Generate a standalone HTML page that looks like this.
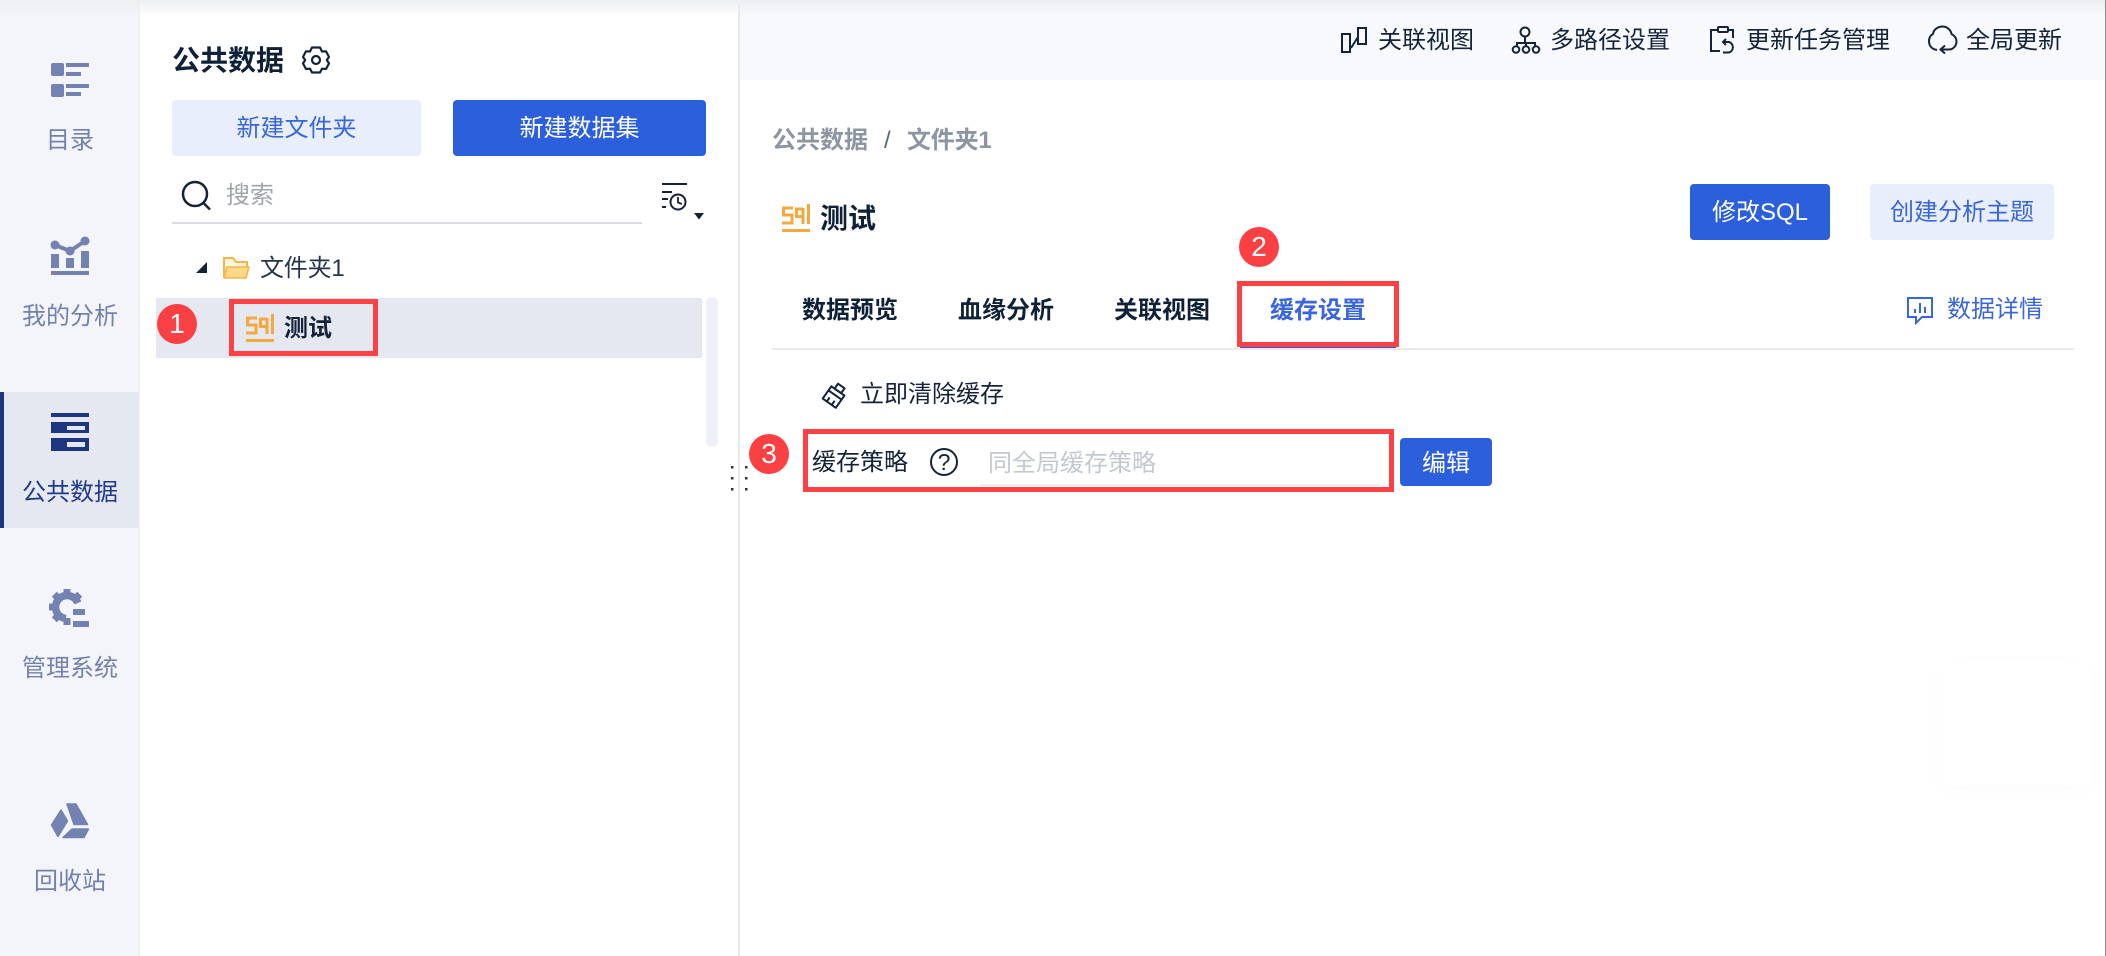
<!DOCTYPE html>
<html lang="zh-CN">
<head>
<meta charset="utf-8">
<title>公共数据</title>
<style>
html,body{margin:0;padding:0;background:#fff}
body{width:2106px;height:956px;position:relative;overflow:hidden;font-family:"Liberation Sans","Noto Sans CJK SC",sans-serif;color:#14233a}
.b{position:absolute;box-sizing:border-box}
.t{position:absolute;white-space:nowrap;font-size:24px;line-height:32px;height:32px;margin-top:1px}
.b.t{margin-top:0}
.c{text-align:center}
.bold{font-weight:700}
.side{color:#7281ad;left:0;width:140px;text-align:center}
.red{position:absolute;box-sizing:border-box;border:5px solid #fd4145}
.num{position:absolute;width:40px;height:40px;border-radius:50%;background:#fb4044;color:#fff;font-size:28px;line-height:40px;text-align:center;font-family:"Liberation Sans",sans-serif}
svg{position:absolute;left:0;top:0}
</style>
</head>
<body>
<!-- backgrounds -->
<div class="b" style="left:740px;top:0;width:1366px;height:80px;background:#f8f9fc"></div>
<div class="b" style="left:0;top:0;width:140px;height:956px;background:#f4f5fa;border-right:2px solid #eef0f5"></div>
<div class="b" style="left:0;top:392px;width:139px;height:136px;background:#e5e8f1;border-left:4px solid #1c3680"></div>
<div class="b" style="left:738px;top:0;width:2px;height:956px;background:#e6e8ef"></div>
<div class="b" style="left:0;top:0;width:2106px;height:16px;background:linear-gradient(#eceef1,rgba(240,241,245,0))"></div>
<div class="b" style="left:2105px;top:0;width:1px;height:956px;background:#8c8c8c"></div>
<div class="b" style="left:1938px;top:660px;width:154px;height:125px;background:#fff;box-shadow:0 6px 26px rgba(0,0,0,.014)"></div>

<!-- sidebar labels -->
<div class="t side" style="top:124px">目录</div>
<div class="t side" style="top:300px">我的分析</div>
<div class="t side" style="top:476px;color:#1f3a8a">公共数据</div>
<div class="t side" style="top:652px">管理系统</div>
<div class="t side" style="top:865px">回收站</div>

<!-- panel -->
<div class="t bold" style="left:172px;top:44px;font-size:28px;color:#0f2138">公共数据</div>
<div class="b t c" style="left:172px;top:100px;width:249px;height:56px;line-height:58px;background:#e8eefb;color:#3a66dc;border-radius:4px">新建文件夹</div>
<div class="b t c" style="left:453px;top:100px;width:253px;height:56px;line-height:58px;background:#2c5fdc;color:#fff;border-radius:4px">新建数据集</div>
<div class="t" style="left:226px;top:179px;color:#a0a4ab">搜索</div>
<div class="b" style="left:172px;top:222px;width:470px;height:2px;background:#d9dce1"></div>
<div class="t" style="left:260px;top:252px;color:#26354b;letter-spacing:-.2px">文件夹1</div>
<div class="b" style="left:156px;top:298px;width:546px;height:60px;background:#e5e8f1"></div>
<div class="t bold" style="left:284px;top:312px;color:#14233a">测试</div>
<div class="b" style="left:706px;top:297px;width:12px;height:150px;background:#eef0f5;border-radius:6px"></div>
<div class="red" style="left:229px;top:299px;width:149px;height:57px"></div>
<div class="num" style="left:157px;top:304px">1</div>

<!-- toolbar -->
<div class="t" style="left:1378px;top:24px">关联视图</div>
<div class="t" style="left:1550px;top:24px">多路径设置</div>
<div class="t" style="left:1746px;top:24px">更新任务管理</div>
<div class="t" style="left:1966px;top:24px">全局更新</div>

<!-- main -->
<div class="t bold" style="left:772px;top:124px;color:#8d95a3">公共数据</div>
<div class="t" style="left:884px;top:124px;color:#5c6675">/</div>
<div class="t bold" style="left:907px;top:124px;color:#8d95a3;letter-spacing:-.2px">文件夹1</div>
<div class="t bold" style="left:820px;top:202px;font-size:28px;color:#0f2138">测试</div>
<div class="b t c" style="left:1690px;top:184px;width:140px;height:56px;line-height:58px;background:#2c5fdc;color:#fff;border-radius:4px">修改SQL</div>
<div class="b t c" style="left:1870px;top:184px;width:184px;height:56px;line-height:58px;background:#e8eefb;color:#3a66dc;border-radius:4px">创建分析主题</div>

<div class="t bold" style="left:802px;top:294px;color:#0f2138">数据预览</div>
<div class="t bold" style="left:958px;top:294px;color:#0f2138">血缘分析</div>
<div class="t bold" style="left:1114px;top:294px;color:#0f2138">关联视图</div>
<div class="t bold" style="left:1270px;top:294px;color:#3a66dc">缓存设置</div>
<div class="t" style="left:1947px;top:293px;color:#3a66dc">数据详情</div>
<div class="b" style="left:772px;top:348px;width:1302px;height:2px;background:#e8eaef"></div>
<div class="b" style="left:1240px;top:346px;width:156px;height:2px;background:#2c5fdc"></div>
<div class="red" style="left:1237px;top:281px;width:162px;height:66px"></div>
<div class="num" style="left:1239px;top:227px">2</div>

<div class="t" style="left:860px;top:378px;color:#14233a">立即清除缓存</div>
<div class="t" style="left:812px;top:446px;color:#14233a">缓存策略</div>
<div class="t" style="left:988px;top:447px;color:#c4c8cf">同全局缓存策略</div>
<div class="b" style="left:980px;top:484px;width:400px;height:2px;background:#ebedf0"></div>
<div class="b t c" style="left:1400px;top:438px;width:92px;height:48px;line-height:52px;background:#2c5fdc;color:#fff;border-radius:4px">编辑</div>
<div class="red" style="left:803px;top:429px;width:591px;height:63px"></div>
<div class="num" style="left:749px;top:434px">3</div>
<div class="t c" style="left:930px;top:445px;width:28px;font-size:23px;color:#14233a">?</div>

<!-- icons -->
<svg width="2106" height="956" viewBox="0 0 2106 956" fill="none">
  <!-- catalog -->
  <g fill="#7382b1">
    <rect x="51" y="63" width="13" height="13" rx="2"/><rect x="51" y="84" width="13" height="13" rx="2"/>
    <rect x="66" y="63" width="23" height="4"/><rect x="66" y="72" width="15" height="4"/>
    <rect x="66" y="84" width="23" height="4"/><rect x="66" y="92" width="15" height="4"/>
  </g>
  <!-- chart -->
  <g fill="#7382b1">
    <rect x="51" y="254" width="8" height="14"/><rect x="66" y="258" width="8" height="10"/><rect x="81" y="251" width="8" height="17"/>
    <rect x="51" y="271" width="38" height="4"/>
    <circle cx="55" cy="245" r="4.500"/><circle cx="70" cy="251" r="4.500"/><circle cx="85" cy="241" r="4.500"/>
  </g>
  <path d="M55 245L70 251L85 241" stroke="#7382b1" stroke-width="4"/>
  <!-- active data -->
  <g fill="#1c3680">
    <rect x="51" y="413" width="38" height="4"/>
    <path fill-rule="evenodd" d="M51 422H89V433H51ZM67 426V430H85V426Z"/>
    <path fill-rule="evenodd" d="M51 438H89V451H51ZM67 442V447H85V442Z"/>
  </g>
  <!-- manage gear -->
  <path d="M77.800 603A11.500 11.500 0 1 0 66 618.500" stroke="#7382b1" stroke-width="7.500"/>
  <g fill="#7382b1">
    <rect x="63.500" y="589" width="7" height="7"/>
    <rect x="63.500" y="589" width="7" height="7" transform="rotate(45 67 607)"/>
    <rect x="63.500" y="589" width="7" height="7" transform="rotate(-45 67 607)"/>
    <rect x="63.500" y="589" width="7" height="7" transform="rotate(-90 67 607)"/>
    <rect x="63.500" y="589" width="7" height="7" transform="rotate(-135 67 607)"/>
    <rect x="63.500" y="589" width="7" height="7" transform="rotate(180 67 607)"/>
    <rect x="73" y="609" width="12" height="6"/>
    <rect x="73" y="621" width="16" height="6"/>
  </g>
  <!-- recycle -->
  <g fill="#7382b1" stroke="#7382b1" stroke-width="1.500" stroke-linejoin="round">
    <path d="M67 804H76L87.500 824.500H74Z"/>
    <path d="M61 810L67.500 821L58 836.500L51.500 825Z"/>
    <path d="M72 829H88.500L84 837.500H63Z"/>
  </g>
  <!-- settings gear -->
  <g stroke="#14233a" stroke-width="2.200" stroke-linejoin="round">
    <path d="M312 47.500H320L322 51.500L326 51.300L329 57L326.800 60L329 63.500L326 69L322 68.700L320 72.500H312L310 68.700L306 69L303 63.500L305.200 60L303 57L306 51.300L310 51.500Z"/>
    <circle cx="316" cy="60" r="4"/>
  </g>
  <!-- search -->
  <circle cx="195" cy="194" r="12" stroke="#14233a" stroke-width="2.500"/>
  <path d="M203.500 203L210 209.500" stroke="#14233a" stroke-width="2.500"/>
  <!-- filter -->
  <path d="M662 184H687M662 192H672M662 199H668M662 207H666" stroke="#14233a" stroke-width="2"/>
  <circle cx="678" cy="202" r="7.500" stroke="#14233a" stroke-width="2"/>
  <path d="M678 197V202.500L682 204" stroke="#14233a" stroke-width="1.800"/>
  <path d="M694 213H704L699 219.500Z" fill="#14233a"/>
  <!-- tree arrow -->
  <path d="M207 262V273H196Z" fill="#14233a"/>
  <!-- folder -->
  <path d="M224 277V258H233L236 262H247V267" fill="#fff4dc" stroke="#f5b54a" stroke-width="2"/>
  <path d="M224 278L227 267H249L246 278Z" fill="#fcd98a" stroke="#f5b54a" stroke-width="1.600" stroke-linejoin="round"/>
  <!-- sql icon tree -->
  <g stroke="#f4a93c" stroke-width="3">
    <path d="M257 318H247.500V325H256V333H246"/>
    <path d="M267 319H260.500V326.500H267M267 318V334"/>
    <path d="M272.500 314V334"/>
    <path d="M246 340.500H274"/>
  </g>
  <!-- sql icon title -->
  <g stroke="#f4a93c" stroke-width="3" transform="translate(536 -110)">
    <path d="M257 318H247.500V325H256V333H246"/>
    <path d="M267 319H260.500V326.500H267M267 318V334"/>
    <path d="M272.500 314V334"/>
    <path d="M246 340.500H274"/>
  </g>
  <!-- toolbar icons -->
  <g stroke="#14233a" stroke-width="2">
    <rect x="1342" y="34" width="8" height="18"/>
    <rect x="1358" y="28" width="8" height="16"/>
    <path d="M1351 48L1358 37"/>
    <circle cx="1525" cy="32" r="4.500"/>
    <path d="M1525 37V43M1517 47V43H1535V47M1526 43V46"/>
    <circle cx="1516" cy="49.500" r="3.300"/><circle cx="1526" cy="49.500" r="3.300"/><circle cx="1536" cy="49.500" r="3.300"/>
    <path d="M1717 30H1711V51H1720M1729 30H1733V38"/>
    <rect x="1718" y="27" width="10" height="5" rx="1"/>
    <path d="M1726 39L1723 42L1726 45M1723 42H1729A5.500 5.500 0 0 1 1729 52.500H1723"/>
    <path d="M1937 50C1931 49 1929 45 1929 41C1929 37 1931 35 1933 34C1933.500 29.500 1938 26.500 1942.500 26.500C1947 26.500 1951 30 1951.500 34C1954.500 35.500 1956.500 38 1956.500 41.500C1956.500 46 1953 49.500 1949 49.500H1941"/>
    <path d="M1945 45.500L1940.500 49.500L1945 53.500"/>
  </g>
  <!-- details icon -->
  <path d="M1908 298H1932V317H1922L1916 323V317H1908Z" stroke="#3a66dc" stroke-width="2"/>
  <path d="M1915 309V313M1920 303V313M1925 307V313" stroke="#3a66dc" stroke-width="2"/>
  <!-- brush -->
  <g stroke="#14233a" stroke-width="2" stroke-linejoin="round" transform="rotate(35 835 395)">
    <rect x="831" y="384" width="8" height="6"/>
    <rect x="827" y="390" width="16" height="5"/>
    <path d="M827 395V405H843V395M832 400V405M838 400V405"/>
  </g>
  <!-- help -->
  <circle cx="944" cy="462" r="13" stroke="#14233a" stroke-width="2"/>
  <!-- drag dots -->
  <g fill="#2a3548">
    <rect x="731" y="466" width="2.500" height="2.500"/><rect x="745" y="466" width="2.500" height="2.500"/>
    <rect x="731" y="477" width="2.500" height="2.500"/><rect x="745" y="477" width="2.500" height="2.500"/>
    <rect x="731" y="488" width="2.500" height="2.500"/><rect x="745" y="488" width="2.500" height="2.500"/>
  </g>
</svg>
</body>
</html>
